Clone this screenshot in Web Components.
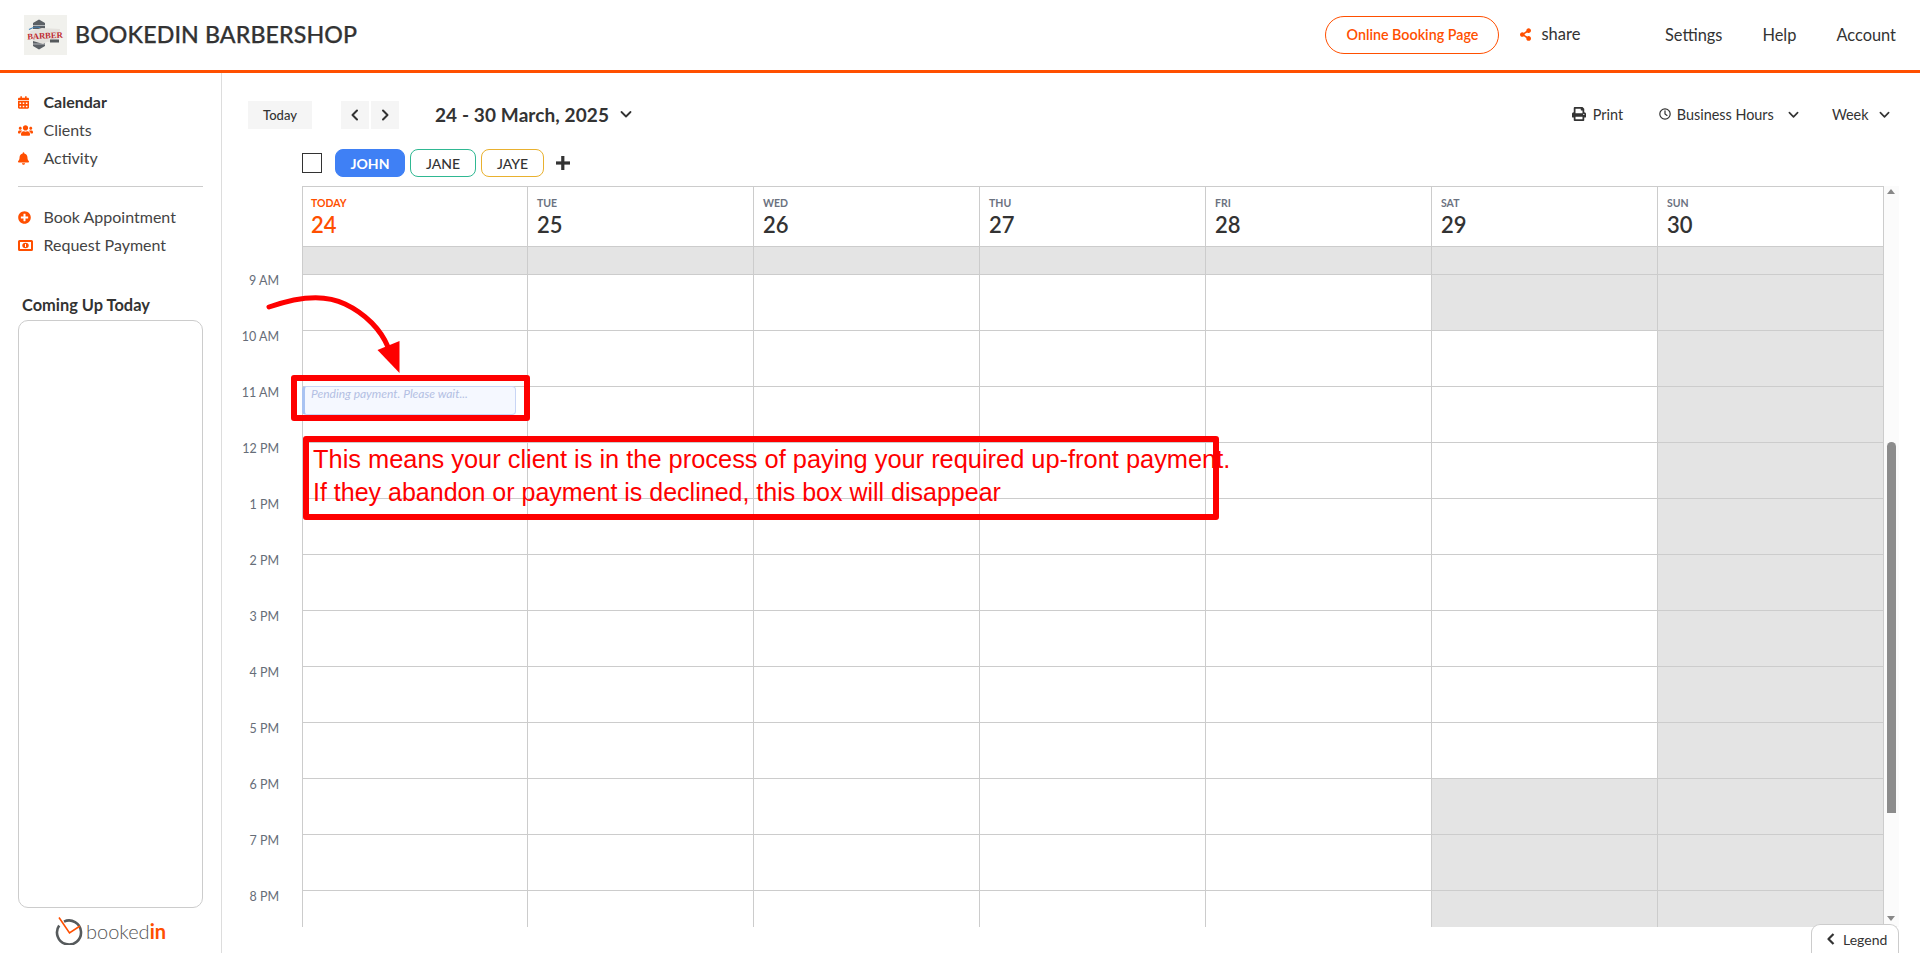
<!DOCTYPE html>
<html lang="en">
<head>
<meta charset="utf-8">
<title>Bookedin Barbershop</title>
<style>
  html, body { margin: 0; height: 100%; background: #fff; overflow: hidden; }
  body { font-family: Lato, "Open Sans", sans-serif; color: #333; }
  #page { position: relative; display: flex; flex-direction: column; height: 953px; }
  #body { display: flex; flex: 1; min-height: 0; }
</style>
</head>
<body>
<div id="page">
  <app-header></app-header>
  <div id="body">
    <side-nav></side-nav>
    <cal-main></cal-main>
  </div>
  <legend-tab></legend-tab>
  <note-layer></note-layer>
</div>

<script>
const ICONS = {
  calendar: ['0 0 448 512', 'M0 464c0 26.5 21.5 48 48 48h352c26.5 0 48-21.5 48-48V192H0v272zm320-196c0-6.6 5.4-12 12-12h40c6.6 0 12 5.4 12 12v40c0 6.6-5.4 12-12 12h-40c-6.6 0-12-5.4-12-12v-40zm0 128c0-6.6 5.4-12 12-12h40c6.6 0 12 5.4 12 12v40c0 6.6-5.4 12-12 12h-40c-6.6 0-12-5.4-12-12v-40zM192 268c0-6.6 5.4-12 12-12h40c6.6 0 12 5.4 12 12v40c0 6.6-5.4 12-12 12h-40c-6.6 0-12-5.4-12-12v-40zm0 128c0-6.6 5.4-12 12-12h40c6.6 0 12 5.4 12 12v40c0 6.6-5.4 12-12 12h-40c-6.6 0-12-5.4-12-12v-40zM64 268c0-6.6 5.4-12 12-12h40c6.6 0 12 5.4 12 12v40c0 6.6-5.4 12-12 12H76c-6.6 0-12-5.4-12-12v-40zm0 128c0-6.6 5.4-12 12-12h40c6.6 0 12 5.4 12 12v40c0 6.6-5.4 12-12 12H76c-6.6 0-12-5.4-12-12v-40zM400 64h-48V16c0-8.8-7.2-16-16-16h-32c-8.8 0-16 7.2-16 16v48H160V16c0-8.8-7.2-16-16-16h-32c-8.8 0-16 7.2-16 16v48H48C21.5 64 0 85.5 0 112v48h448v-48c0-26.5-21.5-48-48-48z'],
  users: ['0 0 640 512', 'M96 224c35.3 0 64-28.7 64-64s-28.7-64-64-64-64 28.7-64 64 28.7 64 64 64zm448 0c35.3 0 64-28.7 64-64s-28.7-64-64-64-64 28.7-64 64 28.7 64 64 64zm32 32h-64c-17.6 0-33.5 7.1-45.1 18.6 40.3 22.1 68.9 62 75.1 109.4h66c17.7 0 32-14.3 32-32v-32c0-35.3-28.7-64-64-64zm-256 0c61.9 0 112-50.1 112-112S381.9 32 320 32 208 82.1 208 144s50.1 112 112 112zm76.8 32h-8.3c-20.8 10-43.9 16-68.5 16s-47.6-6-68.5-16h-8.3C179.6 288 128 339.6 128 403.2V432c0 26.5 21.5 48 48 48h288c26.5 0 48-21.5 48-48v-28.8c0-63.6-51.6-115.2-115.2-115.2zm-223.7-13.4C161.5 263.1 145.6 256 128 256H64c-35.3 0-64 28.7-64 64v32c0 17.7 14.3 32 32 32h65.9c6.3-47.4 34.9-87.3 75.2-109.4z'],
  bell: ['0 0 448 512', 'M224 512c35.32 0 63.97-28.65 63.97-64H160.03c0 35.35 28.65 64 63.97 64zm215.39-149.71c-19.32-20.76-55.47-51.99-55.47-154.29 0-77.7-54.48-139.9-127.94-155.16V32c0-17.67-14.32-32-31.98-32s-31.98 14.33-31.98 32v20.84C118.56 68.1 64.08 130.3 64.08 208c0 102.3-36.15 133.53-55.47 154.29-6 6.45-8.66 14.16-8.61 21.71.11 16.4 12.98 32 32.1 32h383.8c19.12 0 32-15.6 32.1-32 .05-7.55-2.61-15.27-8.61-21.71z'],
  plus: ['0 0 512 512', 'M256 8C119 8 8 119 8 256s111 248 248 248 248-111 248-248S393 8 256 8zm144 276c0 6.6-5.4 12-12 12h-92v92c0 6.6-5.4 12-12 12h-56c-6.6 0-12-5.4-12-12v-92h-92c-6.6 0-12-5.4-12-12v-56c0-6.6 5.4-12 12-12h92v-92c0-6.6 5.4-12 12-12h56c6.6 0 12 5.4 12 12v92h92c6.6 0 12 5.4 12 12v56z'],
  share: ['0 0 448 512', 'M352 320c-22.608 0-43.387 7.819-59.79 20.895l-102.486-64.054a96.551 96.551 0 0 0 0-41.683l102.486-64.054C308.613 184.181 329.392 192 352 192c53.019 0 96-42.981 96-96S405.019 0 352 0s-96 42.981-96 96c0 7.158.79 14.13 2.276 20.841L155.79 180.895C139.387 167.819 118.608 160 96 160c-53.019 0-96 42.981-96 96s42.981 96 96 96c22.608 0 43.387-7.819 59.79-20.895l102.486 64.054A96.301 96.301 0 0 0 256 416c0 53.019 42.981 96 96 96s96-42.981 96-96-42.981-96-96-96z'],
  print: ['0 0 512 512', 'M448 192V77.25c0-8.49-3.37-16.62-9.37-22.63L393.37 9.37c-6-6-14.14-9.37-22.63-9.37H96C78.33 0 64 14.33 64 32v160c-35.35 0-64 28.65-64 64v112c0 8.84 7.16 16 16 16h48v96c0 17.67 14.33 32 32 32h320c17.67 0 32-14.33 32-32v-96h48c8.84 0 16-7.16 16-16V256c0-35.35-28.65-64-64-64zm-64 256H128v-96h256v96zm0-224H128V64h192v48c0 8.84 7.16 16 16 16h48v96zm48 72c-13.25 0-24-10.75-24-24 0-13.26 10.75-24 24-24s24 10.74 24 24c0 13.25-10.75 24-24 24z']
};

function icon(name, w, h, color) {
  const [box, d] = ICONS[name];
  return `<svg width="${w}" height="${h}" viewBox="${box}" fill="${color}" style="display:block;flex:none"><path d="${d}"/></svg>`;
}

const chevron = (w, color = '#333') =>
  `<svg width="${w}" height="${w}" viewBox="0 0 12 12" fill="none" stroke="${color}" stroke-width="1.8" stroke-linecap="round" stroke-linejoin="round" style="display:block;flex:none"><path d="M1.500 4l4.500 4.500L10.500 4"/></svg>`;

class AppHeader extends HTMLElement {
  constructor() {
    super();
    this.attachShadow({ mode: 'open' }).innerHTML = `
<style>
:host { display: flex; align-items: center; height: 70px; border-bottom: 3px solid #ff4f00; padding: 0 24px; flex: none; }
.logo { width: 43px; height: 40px; background: #f1f1ed; flex: none; }
.logo svg { display: block; }
h1 { margin: -2px 0 0 8px; font-size: 23.2px; font-weight: 500; color: #333; white-space: nowrap; letter-spacing: .1px; -webkit-text-stroke: .25px #333; }
.grow { flex: 1; }
.book { height: 36px; width: 172px; border: 1px solid #ff4f00; border-radius: 19px; display: flex; align-items: center; justify-content: center; color: #ff4f00; font-size: 14.3px; font-weight: 600; }
.book span { margin-top: -1px; }
.share { display: flex; align-items: center; margin-left: 21px; font-size: 16.5px; color: #333; width: 144.5px; margin-top: -3px; }
.share svg { margin-top: 2px; }
.share span { margin-left: 10px; }
a { font-size: 16.4px; color: #333; margin: -2px 0 0 40px; }
a:first-of-type { margin-left: 0; }
</style>
<div class="logo">
  <svg width="43" height="40" viewBox="0 0 43 40">
    <path d="M9 8l6-3.500 6 3.500v6h-12z" fill="#5c6166"/>
    <path d="M9 31l6 3.500 6-3.500v-6h-12z" fill="#5c6166"/>
    <path d="M9 10.500h12M9 29h12" stroke="#b5b8bb" stroke-width="1"/>
    <path d="M6 16l12-3 18 1-1 9-3 3-9 1-4 2-10-3z" fill="#e4e2de"/>
    <path d="M5 14.500c5-3 8-3 11-2" stroke="#3f80b5" stroke-width="1.200" fill="none"/>
    <text x="21" y="23.500" text-anchor="middle" font-family="Liberation Serif, serif" font-weight="700" font-size="8.500" fill="#bf2a30" transform="rotate(-3 21 22)">BARBER</text>
    <rect x="26" y="24.500" width="9" height="3" fill="#55595c"/>
  </svg>
</div>
<h1>BOOKEDIN BARBERSHOP</h1>
<div class="grow"></div>
<div class="book"><span>Online Booking Page</span></div>
<div class="share">${icon('share', 11, 13, '#ff4f00')}<span>share</span></div>
<a>Settings</a><a>Help</a><a>Account</a>`;
  }
}

class NavItem extends HTMLElement {
  constructor() {
    super();
    this.attachShadow({ mode: 'open' });
  }
  connectedCallback() {
    const active = this.hasAttribute('active');
    const ic = this.getAttribute('icon');
    const glyph = ic === 'money'
      ? `<svg width="15" height="11" viewBox="0 0 15 11" style="display:block"><rect x="1" y="1" width="13" height="9" rx=".5" fill="#fff" stroke="#ff4f00" stroke-width="2"/><ellipse cx="7.500" cy="5.500" rx="3.200" ry="2.800" fill="#ff4f00"/><rect x="7" y="4" width="1" height="3" fill="#fff"/></svg>`
      : icon(ic, ic === 'users' ? 15 : ic === 'plus' ? 13 : 11, 13, '#ff4f00');
    this.shadowRoot.innerHTML = `
<style>
:host { display: flex; align-items: center; height: 28px; font-size: 16px; color: ${active ? '#333' : '#444'}; font-weight: ${active ? 700 : 400}; }
.i { width: 25.5px; margin-top: 2px; display: flex; align-items: center; }
</style>
<span class="i">${glyph}</span><slot></slot>`;
  }
}

class SideNav extends HTMLElement {
  constructor() {
    super();
    this.attachShadow({ mode: 'open' }).innerHTML = `
<style>
:host { display: flex; flex-direction: column; border-right: 1px solid #ddd; flex: none; padding: 14px 18px 0; width: 185px; }
hr { border: 0; border-top: 1px solid #ccc; margin: 15px 0 15px; width: 185px; }
h3 { margin: 37px 0 5px 4px; font-size: 16.4px; font-weight: 700; line-height: 20px; color: #333; }
.box { flex: 1; border: 1px solid #ccc; border-radius: 10px; }
.foot { height: 45px; display: flex; align-items: center; justify-content: center; flex: none; }
.word { font-size: 20px; font-weight: 300; color: #555; margin-left: 3px; }
.word b { color: #ff4f00; font-weight: 700; }
</style>
<nav-item icon="calendar" active>Calendar</nav-item>
<nav-item icon="users">Clients</nav-item>
<nav-item icon="bell">Activity</nav-item>
<hr>
<nav-item icon="plus">Book Appointment</nav-item>
<nav-item icon="money">Request Payment</nav-item>
<h3>Coming Up Today</h3>
<div class="box"></div>
<div class="foot">
  <svg width="28" height="28" viewBox="0 0 28 28" fill="none" style="display:block;flex:none">
    <path d="M9 4.600A12 12 0 1 1 4.200 8.600" stroke="#565a5c" stroke-width="2.600"/>
    <path d="M4 0.500l10.500 15.500L25 9" stroke="#ff4f00" stroke-width="1.600"/>
  </svg>
  <span class="word">booked<b>in</b></span>
</div>`;
  }
}

class StaffPill extends HTMLElement {
  constructor() {
    super();
    this.attachShadow({ mode: 'open' });
  }
  connectedCallback() {
    const color = this.getAttribute('color');
    const on = this.hasAttribute('selected');
    this.shadowRoot.innerHTML = `
<style>
:host { display: flex; align-items: center; justify-content: center; box-sizing: border-box; height: 28px; width: ${this.getAttribute('w')}px; border-radius: 8px; font-size: 14px; margin-left: 5px;
  border: 1px solid ${color}; background: ${on ? color : '#fff'}; color: ${on ? '#fff' : '#333'}; font-weight: ${on ? 700 : 500}; }
</style><slot></slot>`;
  }
}

class CalToolbar extends HTMLElement {
  constructor() {
    super();
    this.attachShadow({ mode: 'open' }).innerHTML = `
<style>
:host { display: flex; align-items: center; height: 28px; padding: 28px 30px 0 26px; font-size: 14.4px; color: #333; flex: none; }
.btn { height: 28px; background: #f5f5f5; display: flex; align-items: center; justify-content: center; }
.today { width: 64px; font-size: 13px; font-weight: 500; }
.today span { margin-top: -1px; }
.nav { width: 28px; margin-left: 2px; }
.prev { margin-left: 29px; }
.title { margin: -2px 0 0 36px; font-size: 19px; font-weight: 700; color: #333; letter-spacing: .1px; }
.title + svg { margin: -2px 0 0 11px; }
.grow { flex: 1; }
.r { display: flex; align-items: center; margin-top: -2px; }
.print span { margin-left: 6.7px; }
.hours { margin-left: 36.3px; }
.hours span { margin: 0 14.6px 0 5.4px; }
.week { margin-left: 32.5px; }
.week span { margin-right: 10.5px; }
</style>
<div class="btn today"><span>Today</span></div>
<div class="btn nav prev"><svg width="10" height="12" viewBox="0 0 10 12" fill="none" stroke="#333" stroke-width="2" stroke-linecap="round" stroke-linejoin="round"><path d="M7 1.500L2.500 6 7 10.500"/></svg></div>
<div class="btn nav"><svg width="10" height="12" viewBox="0 0 10 12" fill="none" stroke="#333" stroke-width="2" stroke-linecap="round" stroke-linejoin="round"><path d="M3 1.500L7.500 6 3 10.500"/></svg></div>
<div class="title">24 - 30 March, 2025</div>${chevron(12)}
<div class="grow"></div>
<div class="r print">${icon('print', 14, 14, '#333')}<span>Print</span></div>
<div class="r hours"><svg width="12" height="12" viewBox="0 0 12 12" fill="none" stroke="#333" stroke-width="1.200" stroke-linecap="round" style="display:block"><circle cx="6" cy="6" r="5.200"/><path d="M6 2.800V6l2 1.400"/></svg><span>Business Hours</span>${chevron(11)}</div>
<div class="r week"><span>Week</span>${chevron(11)}</div>`;
  }
}

class StaffRow extends HTMLElement {
  constructor() {
    super();
    this.attachShadow({ mode: 'open' }).innerHTML = `
<style>
:host { display: flex; align-items: center; height: 28px; margin-top: 20px; padding-left: 80px; flex: none; }
.check { width: 20px; height: 20px; box-sizing: border-box; border: 1px solid #333; margin-right: 8px; }
.add { margin-left: 11px; }
</style>
<div class="check"></div>
<staff-pill selected color="#3f80f5" w="70">JOHN</staff-pill>
<staff-pill color="#2fb892" w="66">JANE</staff-pill>
<staff-pill color="#e9b12f" w="63">JAYE</staff-pill>
<svg class="add" width="16" height="16" viewBox="0 0 16 16" fill="#333" style="display:block"><rect x="6.200" y="1" width="3.200" height="14"/><rect x="1" y="6.400" width="14" height="3.200"/></svg>`;
  }
}

class WeekGrid extends HTMLElement {
  constructor() {
    super();
    const days = [['TODAY', 24], ['TUE', 25], ['WED', 26], ['THU', 27], ['FRI', 28], ['SAT', 29], ['SUN', 30]];
    const hours = ['9 AM', '10 AM', '11 AM', '12 PM', '1 PM', '2 PM', '3 PM', '4 PM', '5 PM', '6 PM', '7 PM', '8 PM'];
    // which hour rows are closed on the weekend
    const closed = (col, row) => (col === 5 && (row === 0 || row >= 9)) || col === 6;
    const head = days.map(([d, n], i) =>
      `<div class="head${i ? '' : ' now'}"><small>${d}</small><b>${n}</b></div>`).join('');
    const band = days.map(() => '<div class="cell band"></div>').join('');
    const rows = hours.map((_, r) =>
      days.map((_, c) => `<div class="cell${closed(c, r) ? ' off' : ''}"></div>`).join('')).join('');
    const times = hours.map(h => `<div class="t">${h}</div>`).join('');
    this.attachShadow({ mode: 'open' }).innerHTML = `
<style>
:host { display: flex; flex: 1; min-height: 0; margin-top: 9px; margin-bottom: 26px; }
.times { width: 80px; flex: none; box-sizing: border-box; padding: 88px 23px 0 0; }
.t { height: 56px; text-align: right; font-size: 12.5px; line-height: 13px; color: #666d78; }
.grid { display: grid; grid-template-columns: 225px repeat(6, 226px); grid-template-rows: 60px 28px repeat(11, 56px) 37px; width: 1581px; flex: none; overflow: hidden; border-right: 1px solid #ccc; }
.head { border-top: 1px solid #ccc; border-left: 1px solid #ccc; padding: 10px 0 0 9px; box-sizing: border-box; }
.now { padding-left: 8px; }
.head small { display: block; font-size: 10.5px; line-height: 13px; font-weight: 700; color: #6b7280; }
.head b { display: block; font-size: 22px; line-height: 28px; font-weight: 600; color: #333; margin-top: 1px; }
.now small, .now b { color: #ff4f00; }
.cell { border-left: 1px solid #ccc; border-top: 1px solid #ccc; box-sizing: border-box; min-width: 0; }
.band, .off { background: #e4e4e4; }
.bar { width: 15px; flex: none; background: #fbfbfb; position: relative; }
.up, .down { position: absolute; left: 3px; width: 0; height: 0; border: 4.5px solid transparent; }
.up { top: 3px; border-bottom: 5px solid #888; border-top: 0; }
.down { bottom: 6px; border-top: 5px solid #888; border-bottom: 0; }
.thumb { position: absolute; left: 3px; top: 256px; width: 9px; height: 371px; border-radius: 5px 5px 0 0; background: #8c8c8c; }
</style>
<div class="times">${times}</div>
<div class="grid">${head}${band}${rows}</div>
<div class="bar"><div class="up"></div><div class="thumb"></div><div class="down"></div></div>`;
  }
}

class CalMain extends HTMLElement {
  constructor() {
    super();
    this.attachShadow({ mode: 'open' }).innerHTML = `
<style>
:host { display: flex; flex-direction: column; flex: 1; min-width: 0; }
</style>
<cal-toolbar></cal-toolbar>
<staff-row></staff-row>
<week-grid></week-grid>`;
  }
}

class LegendTab extends HTMLElement {
  constructor() {
    super();
    this.attachShadow({ mode: 'open' }).innerHTML = `
<style>
:host { position: absolute; left: 1811px; top: 924px; width: 88px; height: 29px; box-sizing: border-box; background: #fff; border: 1px solid #ccc; border-bottom: 0; border-radius: 9px 9px 0 0; display: flex; align-items: center; padding-left: 15px; font-size: 14px; color: #333; }
span { margin-left: 8px; }
</style>
<svg width="8" height="12" viewBox="0 0 8 12" fill="none" stroke="#333" stroke-width="2.200" stroke-linejoin="round" style="display:block"><path d="M6.500 1L1.500 6l5 5"/></svg><span>Legend</span>`;
  }
}

// red markup drawn on top of the screenshot
class NoteLayer extends HTMLElement {
  constructor() {
    super();
    this.attachShadow({ mode: 'open' }).innerHTML = `
<style>
:host { position: absolute; inset: 0; pointer-events: none; }
.pending { position: absolute; left: 302px; top: 386px; width: 214px; height: 29px; box-sizing: border-box; background: #f5f8ff; border: 1px solid #c8d5f5; border-left: 3px solid #a9c3f2; border-radius: 4px; padding: 0 0 0 6px; font-style: italic; font-size: 12px; line-height: 14px; color: #b3bfe3; }
.frame { position: absolute; box-sizing: border-box; border: 6px solid #fe0000; border-radius: 3px; }
.f1 { left: 291px; top: 375px; width: 239px; height: 46px; }
.f2 { left: 303px; top: 436px; width: 916px; height: 84px; }
.msg { position: absolute; left: 313px; top: 443px; font-family: "Liberation Sans", Arial, sans-serif; font-size: 25.4px; line-height: 33px; color: #fe0000; white-space: nowrap; }
.msg span { font-size: 25px; }
svg { position: absolute; left: 0; top: 0; }
</style>
<div class="pending">Pending payment. Please wait...</div>
<div class="frame f1"></div>
<div class="frame f2"></div>
<div class="msg">This means your client is in the process of paying your required up-front payment.<br><span>If they abandon or payment is declined, this box will disappear</span></div>
<svg width="420" height="380" viewBox="0 0 420 380">
  <path d="M269 307C300 296 325 294 345 304C366 314 381 330 388 347" fill="none" stroke="#fe0000" stroke-width="5" stroke-linecap="round"/>
  <path d="M377.500 350L399.500 341V373z" fill="#fe0000"/>
</svg>`;
  }
}

customElements.define('app-header', AppHeader);
customElements.define('nav-item', NavItem);
customElements.define('side-nav', SideNav);
customElements.define('staff-pill', StaffPill);
customElements.define('cal-toolbar', CalToolbar);
customElements.define('staff-row', StaffRow);
customElements.define('week-grid', WeekGrid);
customElements.define('cal-main', CalMain);
customElements.define('legend-tab', LegendTab);
customElements.define('note-layer', NoteLayer);
</script>
</body>
</html>
